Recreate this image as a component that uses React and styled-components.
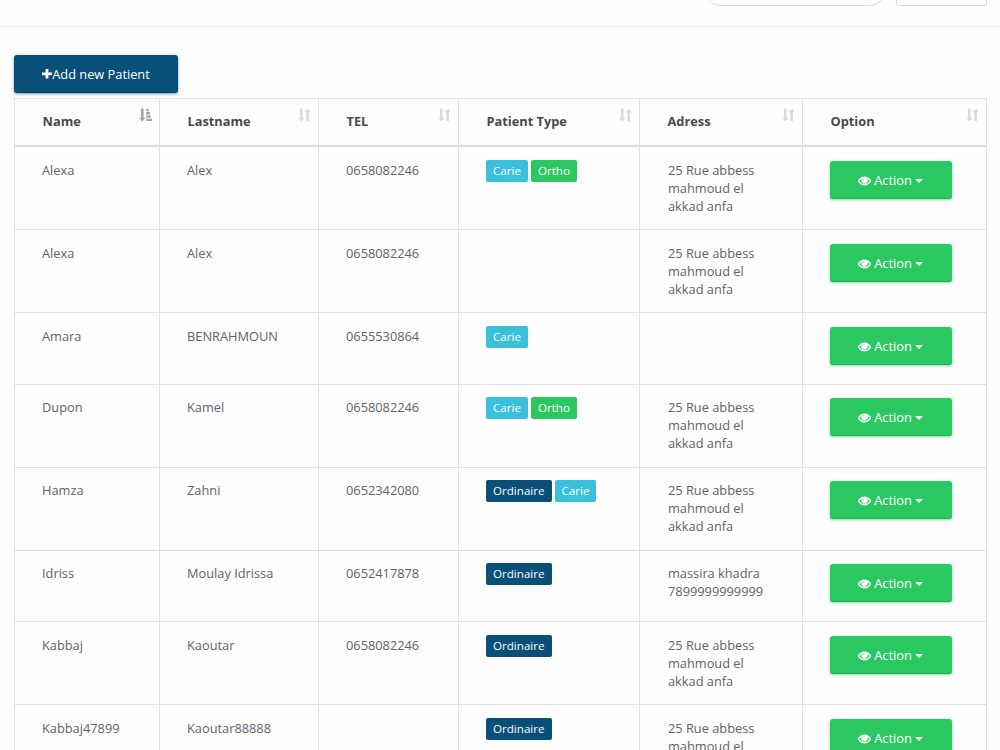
import React from "react"
import styled, { createGlobalStyle } from "styled-components"

const GlobalStyle = createGlobalStyle`
  * {
    box-sizing: border-box;
  }

  body {
    margin: 0;
    height: 750px;
    overflow: hidden;
    background: #fefefe;
    color: #606265;
    font-family: "Open Sans", "Noto Sans", sans-serif;
    font-size: 12.8px;
    line-height: 18.2px;
  }
`

const Page = styled.div`
  height: 750px;
  overflow: hidden;
`

const TopBar = styled.div`
  display: flex;
  justify-content: flex-end;
  align-items: flex-end;
  gap: 10px;
  height: 27px;
  padding: 0 13px 20px 0;
  border-bottom: 1px solid #ebeced;
`

const SearchBox = styled.div`
  width: 182px;
  height: 36px;
  border: 1px solid #d9dcdc;
  border-radius: 17px;
`

const SelectBox = styled.div`
  width: 91px;
  height: 36px;
  border: 1px solid #d3d6d7;
  border-radius: 2px;
`

const Content = styled.div`
  padding: 28px 13px 0 14px;
`

const Button = styled.button`
  display: flex;
  align-items: center;
  justify-content: center;
  width: 122px;
  height: 38px;
  padding: 0 1px 0 0;
  border: 0;
  border-radius: 3px;
  background: #2bc861;
  box-shadow: 0 1px 3px rgba(43, 200, 97, 0.6), inset 0 -1px 0 rgba(0, 0, 0, 0.12);
  color: #fff;
  font: inherit;
`

const AddButton = styled(Button)`
  width: 164px;
  margin-bottom: 5px;
  padding: 0;
  background: #085078;
  box-shadow: 0 1px 3px rgba(8, 80, 120, 0.6), inset 0 -1px 0 rgba(0, 0, 0, 0.12);
`

const Icon = styled.svg`
  flex: none;
  fill: currentColor;
`

const Caret = styled.span`
  margin: 1px 0 0 3px;
  border-top: 4px solid;
  border-left: 4px solid transparent;
  border-right: 4px solid transparent;
`

const ActionLabel = styled.span`
  margin-left: 3px;
`

const Table = styled.table`
  width: 973px;
  table-layout: fixed;
  border-spacing: 0;
  border-top: 1px solid #e0e1e1;
  border-left: 1px solid #e0e1e1;
`

const Th = styled.th`
  height: 48px;
  padding: 0;
  border-right: 1px solid #dfdfdf;
  border-bottom: 2px solid #dcdcdc;
  color: #47494b;
  font-weight: 700;
  text-align: left;
  vertical-align: top;
`

const HeadCell = styled.div`
  display: flex;
  justify-content: space-between;
  padding: 13px 6px 0 27.5px;
`

const SortIcon = styled(Icon)`
  margin-top: -4px;
  color: ${(props) => (props.$active ? "#a3a4a5" : "#dadbdb")};
`

const Td = styled.td`
  padding: 14px 27px 0 27px;
  border-right: 1px solid #dfdfdf;
  border-bottom: 1px solid #dfdfdf;
  vertical-align: top;

  &:nth-child(5) {
    padding-left: 28px;
  }
`

const Row = styled.tr`
  height: ${(props) => props.$height}px;

  ${Td} {
    padding-top: ${(props) => props.$top || 14}px;
  }
`

const Badges = styled.div`
  display: flex;
  gap: 3px;
  margin-top: -1px;
`

const badgeColors = {
  Carie: "#3bc0dc",
  Ortho: "#2bc861",
  Ordinaire: "#085078",
}

const Badge = styled.span`
  height: 22px;
  padding: 0 7px;
  border-radius: 2px;
  background: ${(props) => badgeColors[props.$type]};
  color: #fff;
  font-size: 11.6px;
  font-weight: 500;
  line-height: 21px;
`

const columns = [
  { label: "Name", width: 145 },
  { label: "Lastname", width: 159 },
  { label: "TEL", width: 140 },
  { label: "Patient Type", width: 181 },
  { label: "Adress", width: 163 },
  { label: "Option", width: 184 },
]

const address = "25 Rue abbess mahmoud el akkad anfa"

const patients = [
  { name: "Alexa", lastname: "Alex", tel: "0658082246", types: ["Carie", "Ortho"], address, height: 83 },
  { name: "Alexa", lastname: "Alex", tel: "0658082246", types: [], address, height: 83 },
  { name: "Amara", lastname: "BENRAHMOUN", tel: "0655530864", types: ["Carie"], address: "", height: 72 },
  { name: "Dupon", lastname: "Kamel", tel: "0658082246", types: ["Carie", "Ortho"], address, height: 83, top: 13 },
  { name: "Hamza", lastname: "Zahni", tel: "0652342080", types: ["Ordinaire", "Carie"], address, height: 83, top: 13 },
  { name: "Idriss", lastname: "Moulay Idrissa", tel: "0652417878", types: ["Ordinaire"], address: "massira khadra 7899999999999", height: 71, top: 13 },
  { name: "Kabbaj", lastname: "Kaoutar", tel: "0658082246", types: ["Ordinaire"], address, height: 83 },
  { name: "Kabbaj47899", lastname: "Kaoutar88888", tel: "", types: ["Ordinaire"], address, height: 83 },
]

const PlusIcon = () => (
  <Icon width="10" height="10" viewBox="0 0 10 10">
    <path d="M3.6 0h2.8v3.4H10v2.8H6.4v3.4H3.6V6.2H0V3.4h3.6z" />
  </Icon>
)

const EyeIcon = () => (
  <Icon width="13" height="13" viewBox="0 0 1792 1792" stroke="currentColor" strokeWidth="70">
    <path d="M1664 960q-152-236-381-353 61 104 61 225 0 185-131.5 316.5t-316.5 131.5-316.5-131.5-131.5-316.5q0-121 61-225-229 117-381 353 133 205 333.5 326.5t434.5 121.5 434.5-121.5 333.5-326.5zm-720-384q0-20-14-34t-34-14q-125 0-214.5 89.5t-89.5 214.5q0 20 14 34t34 14 34-14 14-34q0-86 61-147t147-61q20 0 34-14t14-34zm848 384q0 34-20 69-140 230-376.5 368.5t-499.5 138.5-499.5-139-376.5-368q-20-35-20-69t20-69q140-229 376.5-368t499.5-139 499.5 139 376.5 368q20 35 20 69z" />
  </Icon>
)

const SortArrows = ({ active }) => (
  <SortIcon $active={active} width="14" height="14" viewBox="0 0 14 14">
    <path d="M2 0.5h2.6v9.3h2L3.3 13.5 0 9.8h2z" />
    {active ? (
      <path d="M7.2 0.8h2.4v2.4H7.2zM7.2 4.1h3.6v2.4H7.2zM7.2 7.4h4.6v2.4H7.2zM7.2 10.7H13v2.4H7.2z" />
    ) : (
      <path d="M8.4 13.3V4.2h-2L9.7 0.5l3.3 3.7h-2v9.1z" />
    )}
  </SortIcon>
)

const PatientRow = ({ patient }) => (
  <Row $height={patient.height} $top={patient.top}>
    <Td>{patient.name}</Td>
    <Td>{patient.lastname}</Td>
    <Td>{patient.tel}</Td>
    <Td>
      <Badges>
        {patient.types.map((type) => (
          <Badge key={type} $type={type}>
            {type}
          </Badge>
        ))}
      </Badges>
    </Td>
    <Td>{patient.address}</Td>
    <Td>
      <Button>
        <EyeIcon />
        <ActionLabel>Action</ActionLabel>
        <Caret />
      </Button>
    </Td>
  </Row>
)

class App extends React.Component {
  state = {
    sortedBy: "Name",
  }

  render() {
    return (
      <Page>
        <GlobalStyle />
        <TopBar>
          <SearchBox />
          <SelectBox />
        </TopBar>
        <Content>
          <AddButton>
            <PlusIcon />
            Add new Patient
          </AddButton>
          <Table>
            <colgroup>
              {columns.map((column) => (
                <col key={column.label} style={{ width: column.width }} />
              ))}
            </colgroup>
            <thead>
              <tr>
                {columns.map((column) => (
                  <Th key={column.label} onClick={() => this.setState({ sortedBy: column.label })}>
                    <HeadCell>
                      {column.label}
                      <SortArrows active={this.state.sortedBy === column.label} />
                    </HeadCell>
                  </Th>
                ))}
              </tr>
            </thead>
            <tbody>
              {patients.map((patient) => (
                <PatientRow key={patient.name + patient.types.join()} patient={patient} />
              ))}
            </tbody>
          </Table>
        </Content>
      </Page>
    )
  }
}

export default App
